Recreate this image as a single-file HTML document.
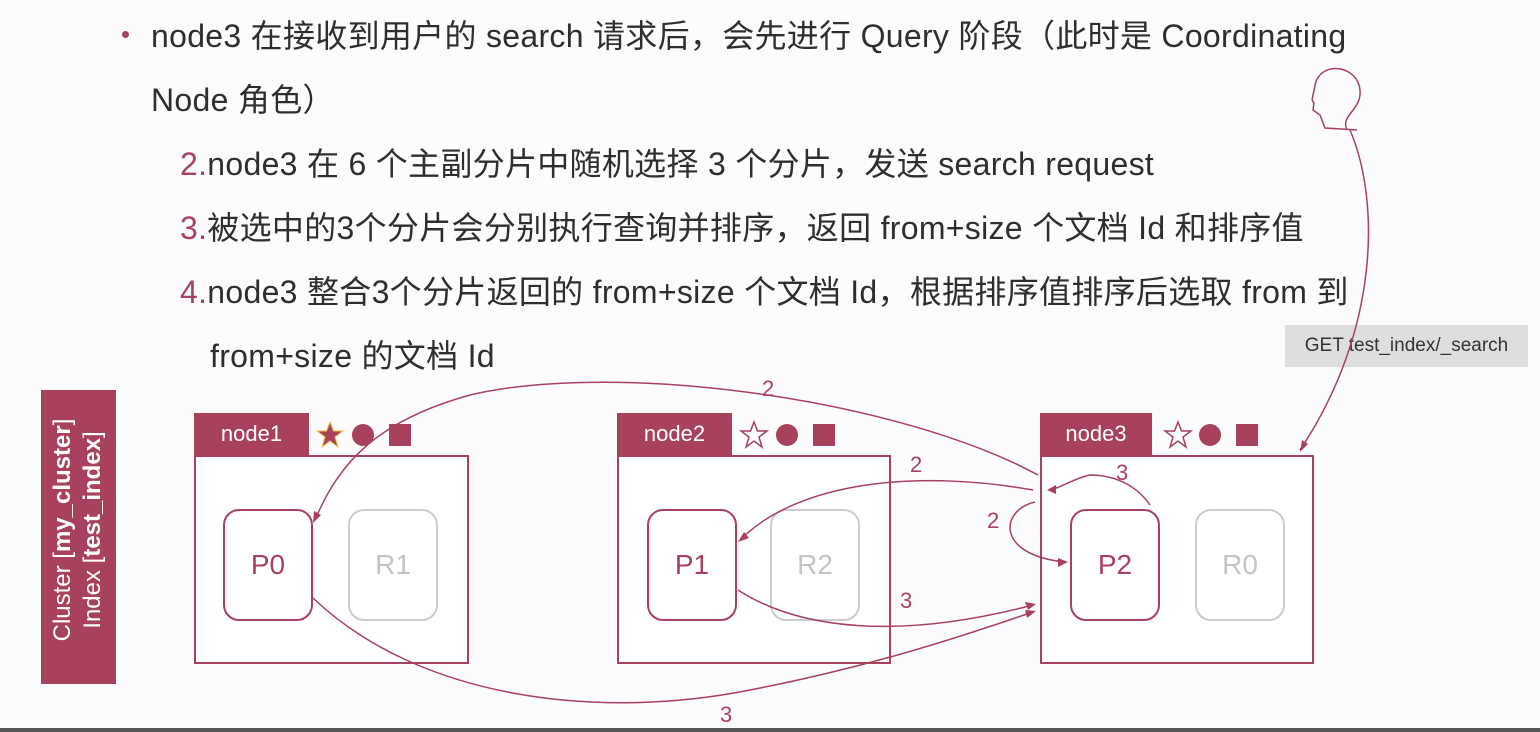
<!DOCTYPE html>
<html><head><meta charset="utf-8"><style>
body{margin:0;width:1540px;height:732px;background:#fcfcfc;overflow:hidden;position:relative;font-family:"Liberation Sans","Noto Sans CJK SC",sans-serif;color:#2e2e2e}
.t{position:absolute;font-size:32px;white-space:nowrap;letter-spacing:0.3px}
.n{color:#a8415b}
.hdr{position:absolute;background:#a8415b;color:#fff;font-size:22px;text-align:center;line-height:42px;height:42px}
.body{position:absolute;border:2px solid #a8415b;background:#fff;box-sizing:border-box}
.sh{position:absolute;border:2px solid #a8415b;border-radius:16px;box-sizing:border-box;font-size:28px;color:#a8415b;text-align:center;line-height:108px;width:90px;height:112px}
.sh.g{border-color:#ccc;color:#c4c4c4}
.lab{position:absolute;font-size:22px;color:#a8415b}
</style></head><body>
<div style="position:absolute;left:122px;top:31px;width:7px;height:7px;border-radius:50%;background:#a8415b"></div>
<div class="t" style="left:151px;top:11px">node3 在接收到用户的 search 请求后，会先进行 Query 阶段（此时是 Coordinating</div>
<div class="t" style="left:151px;top:75px">Node 角色）</div>
<div class="t" style="left:180px;top:139px"><span class="n">2.</span>node3 在 6 个主副分片中随机选择 3 个分片，发送 search request</div>
<div class="t" style="left:180px;top:203px"><span class="n">3.</span>被选中的3个分片会分别执行查询并排序，返回 from+size 个文档 Id 和排序值</div>
<div class="t" style="left:180px;top:267px"><span class="n">4.</span>node3 整合3个分片返回的 from+size 个文档 Id，根据排序值排序后选取 from 到</div>
<div class="t" style="left:210px;top:331px">from+size 的文档 Id</div>

<div style="position:absolute;left:41px;top:390px;width:75px;height:294px;background:#a8415b"></div>
<div style="position:absolute;left:78px;top:530px;transform:translate(-50%,-50%) rotate(-90deg);color:#fff;font-size:24px;line-height:30px;text-align:center;white-space:nowrap">Cluster [<b>my_cluster</b>]<br>Index [<b>test_index</b>]</div>

<div style="position:absolute;left:1285px;top:325px;width:243px;height:42px;background:#dedede;font-size:19px;line-height:42px;text-align:center;color:#333">GET test_index/_search</div>

<div class="body" style="left:194px;top:455px;width:275px;height:209px"></div>
<div class="hdr" style="left:194px;top:413px;width:115px">node1</div>
<div class="body" style="left:617px;top:455px;width:274px;height:209px"></div>
<div class="hdr" style="left:617px;top:413px;width:115px">node2</div>
<div class="body" style="left:1040px;top:455px;width:274px;height:209px"></div>
<div class="hdr" style="left:1040px;top:413px;width:112px">node3</div>

<div class="sh" style="left:223px;top:509px">P0</div>
<div class="sh g" style="left:348px;top:509px">R1</div>
<div class="sh" style="left:647px;top:509px">P1</div>
<div class="sh g" style="left:770px;top:509px">R2</div>
<div class="sh" style="left:1070px;top:509px">P2</div>
<div class="sh g" style="left:1195px;top:509px">R0</div>

<svg width="1540" height="732" style="position:absolute;left:0;top:0">
<g fill="#a8415b">
<polygon points="330,422 333.5,431 343,431 335,437 338,447 330,441 322,447 325,437 317,431 326.5,431" stroke="#f0c040" stroke-width="1"/>
<circle cx="363" cy="435" r="11"/><rect x="389" y="424" width="22" height="22"/>
<circle cx="787" cy="435" r="11"/><rect x="813" y="424" width="22" height="22"/>
<circle cx="1210" cy="435" r="11"/><rect x="1236" y="424" width="22" height="22"/>
</g>
<g fill="none" stroke="#a8415b" stroke-width="1.5">
<polygon points="754,422 757.5,431 767,431 759,437 762,447 754,441 746,447 749,437 741,431 750.5,431"/>
<polygon points="1178,422 1181.5,431 1191,431 1183,437 1186,447 1178,441 1170,447 1173,437 1165,431 1174.5,431"/>
<path d="M1347,130 C1340,115 1362,110 1360,90 C1358,65 1320,60 1315,85 C1314,95 1310,100 1314,103 L1313,110 L1320,115 L1325,128 L1357,130"/>
<path d="M1350,130 C1380,200 1380,330 1300,450"/>
<path d="M1038,475 C900,400 620,360 470,395 C380,420 340,460 315,520"/>
<path d="M1033,490 C920,470 800,480 740,540"/>
<path d="M1150,505 C1140,490 1120,475 1090,475 C1075,478 1060,488 1050,490"/>
<path d="M1035,502 C1000,510 995,555 1065,562"/>
<path d="M738,590 C800,630 900,640 1033,605"/>
<path d="M313,598 C420,700 600,720 750,690 C880,665 980,630 1033,612"/>
</g>
<g fill="#a8415b">
<polygon points="1300,452 1302,440 1308,444"/>
<polygon points="313,523 314,511 321,515"/>
<polygon points="738,542 744,532 749,538"/>
<polygon points="1047,490 1056,485 1056,494"/>
<polygon points="1068,562 1058,558 1058,567"/>
<polygon points="1036,604 1025,602 1028,610"/>
<polygon points="1036,611 1025,610 1027,618"/>
</g>
</svg>
<div class="lab" style="left:762px;top:376px">2</div>
<div class="lab" style="left:910px;top:452px">2</div>
<div class="lab" style="left:1116px;top:460px">3</div>
<div class="lab" style="left:987px;top:508px">2</div>
<div class="lab" style="left:900px;top:588px">3</div>
<div class="lab" style="left:720px;top:702px">3</div>
<div style="position:absolute;left:0;top:728px;width:1540px;height:4px;background:#555"></div>
</body></html>
